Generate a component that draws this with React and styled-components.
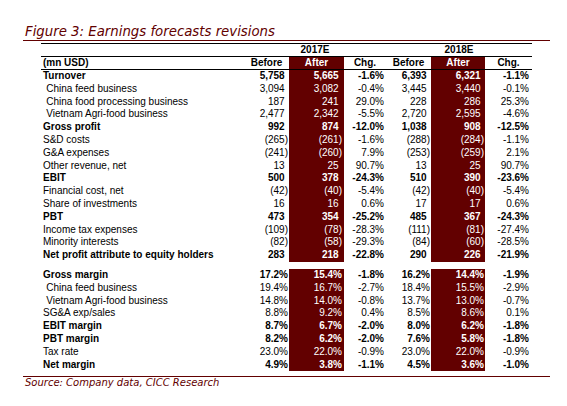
import React from "react";
import styled, { createGlobalStyle } from "styled-components";

const GlobalStyle = createGlobalStyle`
  body {
    margin: 0;
    background: #ffffff;
    font-family: "Liberation Sans", Arial, sans-serif;
    font-size: 10px;
    color: #000000;
  }
`;

const MAROON = "#620000";
const COLS = "203px 45px 55px 42px 45px 54px 47px";
const PADS = [1, 2, 2, 1, 1, 3];
const FILLED = [false, true, false, false, true, false];

const incomeRows = [
  { label: "Turnover", bold: true, v: ["5,758", "5,665", "-1.6%", "6,393", "6,321", "-1.1%"] },
  { label: "China feed business", indent: true, v: ["3,094", "3,082", "-0.4%", "3,445", "3,440", "-0.1%"] },
  { label: "China food processing business", indent: true, v: ["187", "241", "29.0%", "228", "286", "25.3%"] },
  { label: "Vietnam Agri-food business", indent: true, v: ["2,477", "2,342", "-5.5%", "2,720", "2,595", "-4.6%"] },
  { label: "Gross profit", bold: true, v: ["992", "874", "-12.0%", "1,038", "908", "-12.5%"] },
  { label: "S&D costs", v: ["(265)", "(261)", "-1.6%", "(288)", "(284)", "-1.1%"] },
  { label: "G&A expenses", v: ["(241)", "(260)", "7.9%", "(253)", "(259)", "2.1%"] },
  { label: "Other revenue, net", v: ["13", "25", "90.7%", "13", "25", "90.7%"] },
  { label: "EBIT", bold: true, v: ["500", "378", "-24.3%", "510", "390", "-23.6%"] },
  { label: "Financial cost, net", v: ["(42)", "(40)", "-5.4%", "(42)", "(40)", "-5.4%"] },
  { label: "Share of investments", v: ["16", "16", "0.6%", "17", "17", "0.6%"] },
  { label: "PBT", bold: true, v: ["473", "354", "-25.2%", "485", "367", "-24.3%"] },
  { label: "Income tax expenses", v: ["(109)", "(78)", "-28.3%", "(111)", "(81)", "-27.4%"] },
  { label: "Minority interests", v: ["(82)", "(58)", "-29.3%", "(84)", "(60)", "-28.5%"] },
  { label: "Net profit attribute to equity holders", bold: true, v: ["283", "218", "-22.8%", "290", "226", "-21.9%"] },
];

const marginRows = [
  { label: "Gross margin", bold: true, v: ["17.2%", "15.4%", "-1.8%", "16.2%", "14.4%", "-1.9%"] },
  { label: "China feed business", indent: true, v: ["19.4%", "16.7%", "-2.7%", "18.4%", "15.5%", "-2.9%"] },
  { label: "Vietnam Agri-food business", indent: true, v: ["14.8%", "14.0%", "-0.8%", "13.7%", "13.0%", "-0.7%"] },
  { label: "SG&A exp/sales", v: ["8.8%", "9.2%", "0.4%", "8.5%", "8.6%", "0.1%"] },
  { label: "EBIT margin", bold: true, v: ["8.7%", "6.7%", "-2.0%", "8.0%", "6.2%", "-1.8%"] },
  { label: "PBT margin", bold: true, v: ["8.2%", "6.2%", "-2.0%", "7.6%", "5.8%", "-1.8%"] },
  { label: "Tax rate", v: ["23.0%", "22.0%", "-0.9%", "23.0%", "22.0%", "-0.9%"] },
  { label: "Net margin", bold: true, v: ["4.9%", "3.8%", "-1.1%", "4.5%", "3.6%", "-1.0%"] },
];

const Figure = styled.div`
  margin-left: 23px;
  width: 527px;
  padding-top: 24px;
`;

const Title = styled.div`
  font-family: "DejaVu Sans", Verdana, sans-serif;
  font-style: italic;
  font-size: 13.3px;
  line-height: 16px;
  color: ${MAROON};
  padding-left: 2px;
  border-bottom: 1px solid ${MAROON};
`;

const Table = styled.div`
  margin: 2px 0 4.6px 18px;
  width: 491px;
`;

const GroupRow = styled.div`
  display: grid;
  grid-template-columns: 203px 142px 146px;
  height: 12px;
  line-height: 12px;
  font-weight: bold;
  border-top: 1px solid #000;
  border-bottom: 1px solid #000;
`;

const GroupCell = styled.div`
  text-align: center;
`;

const Row = styled.div`
  display: grid;
  grid-template-columns: ${COLS};
  height: ${(p) => p.$h || "12.8px"};
  line-height: ${(p) => p.$h || "12.8px"};
  font-weight: ${(p) => (p.$bold ? "bold" : "normal")};
  border-bottom: ${(p) => (p.$rule ? "1px solid #000" : "none")};
  white-space: nowrap;
`;

const Label = styled.div`
  padding-left: ${(p) => (p.$indent ? "5.3px" : "2px")};
`;

const Cell = styled.div`
  text-align: ${(p) => (p.$center ? "center" : "right")};
  padding-right: ${(p) => (p.$center ? 0 : p.$pad)}px;
  background: ${(p) => (p.$fill ? MAROON : "transparent")};
  color: ${(p) => (p.$fill ? "#ffffff" : "#000000")};
`;

const Hang = styled.span`
  visibility: hidden;
`;

const Spacer = styled.div`
  height: 7px;
`;

const Source = styled.div`
  font-family: "DejaVu Sans", Verdana, sans-serif;
  font-style: italic;
  font-size: 10px;
  line-height: 12px;
  color: ${MAROON};
  padding-left: 2px;
  border-top: 1px solid ${MAROON};
`;

function Value({ text }) {
  const needsHang = !text.endsWith(")") && !text.endsWith("%");
  return (
    <>
      {text}
      {needsHang && <Hang>)</Hang>}
    </>
  );
}

function DataRow({ row }) {
  return (
    <Row $bold={row.bold}>
      <Label $indent={row.indent}>{row.label}</Label>
      {row.v.map((val, i) => (
        <Cell key={i} $pad={PADS[i]} $fill={FILLED[i]}>
          <Value text={val} />
        </Cell>
      ))}
    </Row>
  );
}

export default function App() {
  const heads = ["Before", "After", "Chg.", "Before", "After", "Chg."];
  return (
    <>
      <GlobalStyle />
      <Figure>
        <Title>Figure 3: Earnings forecasts revisions</Title>
        <Table>
          <GroupRow>
            <div />
            <GroupCell>2017E</GroupCell>
            <GroupCell>2018E</GroupCell>
          </GroupRow>
          <Row $bold $rule $h="12px">
            <Label>(mn USD)</Label>
            {heads.map((h, i) => (
              <Cell key={i} $center $fill={FILLED[i]}>
                {h}
              </Cell>
            ))}
          </Row>
          {incomeRows.map((r) => (
            <DataRow key={r.label} row={r} />
          ))}
          <Spacer />
          {marginRows.map((r) => (
            <DataRow key={"m-" + r.label} row={r} />
          ))}
        </Table>
        <Source>Source: Company data, CICC Research</Source>
      </Figure>
    </>
  );
}
